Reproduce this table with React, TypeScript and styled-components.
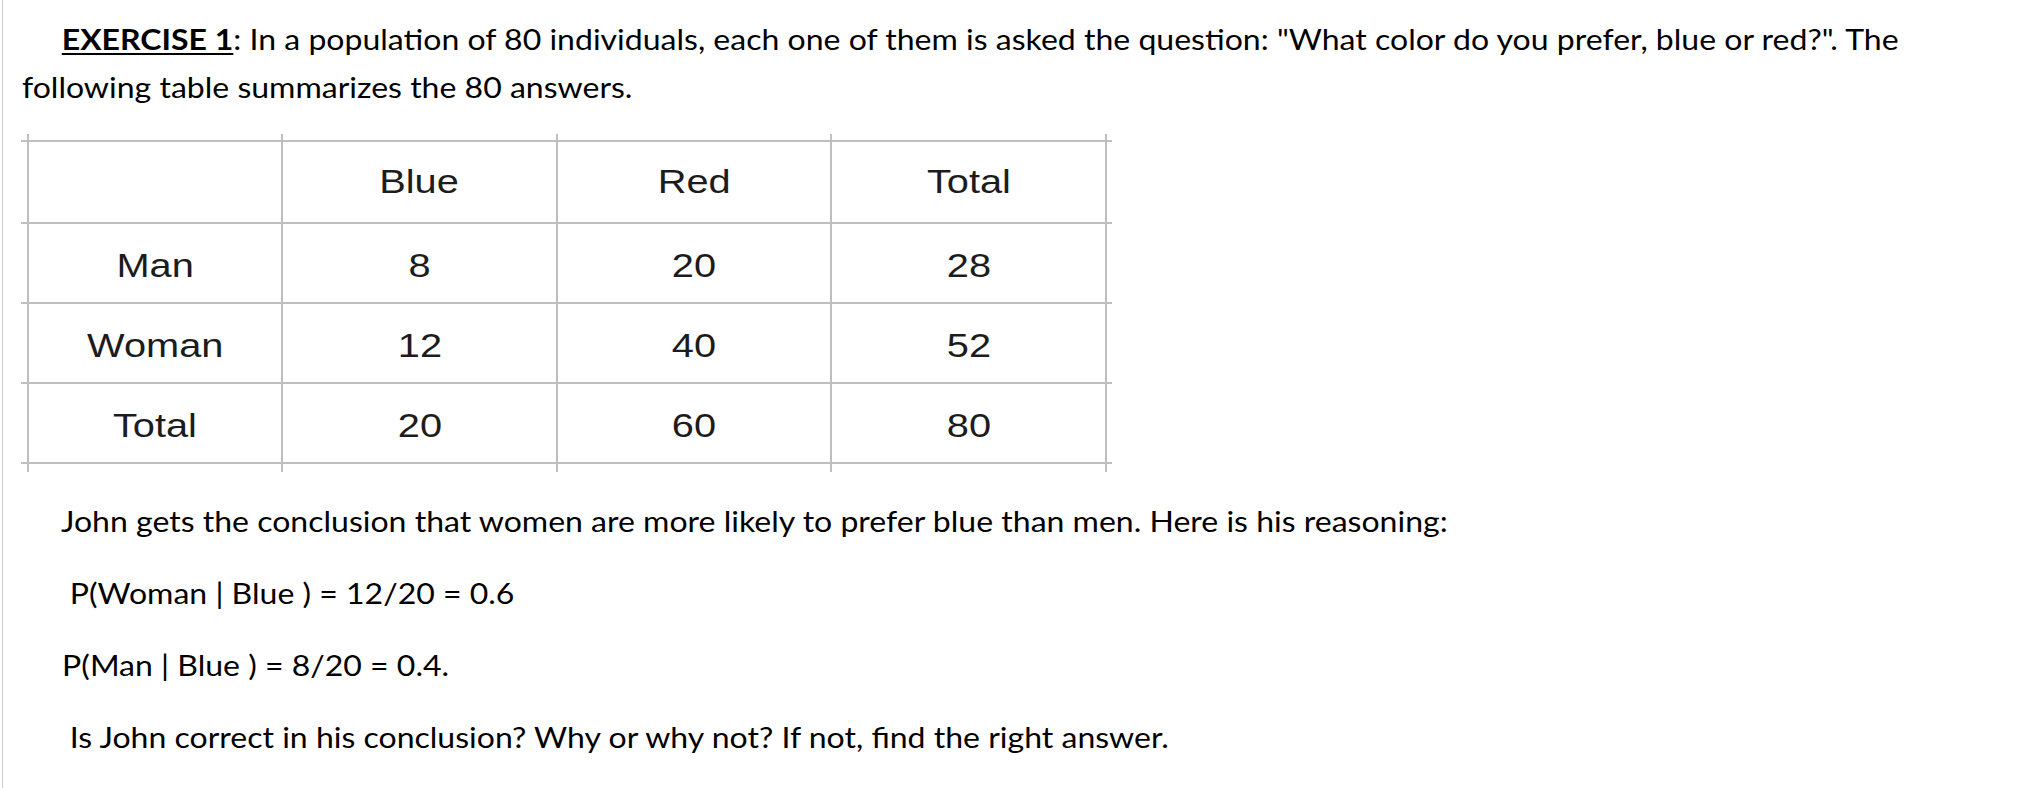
import React from "react";
import styled, { createGlobalStyle } from "styled-components";

const GlobalStyle = createGlobalStyle`
  html, body { margin: 0; padding: 0; background: #ffffff; }
  body { font-family: Lato, "Noto Sans", sans-serif; color: #000000; }
`;

const LINE = "#bfbfbf";
const COLS = "6px 254px 275px 274px 275px 7px";

const Page = styled.div`
  margin-left: 2px;
  border-left: 1px solid #cfcfcf;
  min-height: 788px;
  box-sizing: border-box;
  padding-top: 15px;
  overflow: hidden;
`;

const Intro = styled.p`
  margin: 0;
  padding-left: 19px;
  font-size: 29px;
  line-height: 48px;
  white-space: nowrap;
  transform: scaleX(1.104);
  transform-origin: 19px center;
`;

const FirstLine = styled.span`
  padding-left: 36px;
`;

const Label = styled.strong`
  font-weight: 700;
  text-decoration: underline;
  text-underline-offset: 3px;
`;

const TableFrame = styled.div`
  margin: 23px 0 0 18px;
  width: max-content;
`;

const Row = styled.div<{ $h: number; $top?: boolean; $bottom?: boolean }>`
  display: grid;
  grid-template-columns: ${COLS};
  height: ${(p) => p.$h}px;
  box-sizing: border-box;
  border-top: ${(p) => (p.$top ? `2px solid ${LINE}` : "none")};
  border-bottom: ${(p) => (p.$bottom ? `2px solid ${LINE}` : "none")};
`;

const Cell = styled.div<{ $line?: boolean; $head?: boolean }>`
  display: flex;
  align-items: center;
  justify-content: center;
  box-sizing: border-box;
  padding: ${(p) => (p.$head ? "0 0 2px" : "3px 0 0")};
  border-left: ${(p) => (p.$line ? `2px solid ${LINE}` : "none")};
`;

const CellText = styled.span`
  display: inline-block;
  font-family: "Liberation Sans", Arial, sans-serif;
  font-size: 34px;
  line-height: 1;
  color: #1c1c1c;
  transform: scaleX(1.17);
`;

const Reasoning = styled.div`
  display: flex;
  flex-direction: column;
  gap: 22px;
  padding: 24px 0 0 58px;
  font-size: 29px;
  line-height: 50px;
  transform: scaleX(1.104);
  transform-origin: 58px center;
`;

const Line = styled.p<{ $indent?: number }>`
  margin: 0;
  padding-left: ${(p) => p.$indent ?? 0}px;
  white-space: nowrap;
`;

const rows = [
  { h: 82, cells: ["", "Blue", "Red", "Total"] },
  { h: 80, cells: ["Man", "8", "20", "28"] },
  { h: 80, cells: ["Woman", "12", "40", "52"] },
  { h: 82, cells: ["Total", "20", "60", "80"] },
];

const StubRow = ({ h }: { h: number }) => (
  <Row $h={h}>
    <Cell />
    <Cell $line />
    <Cell $line />
    <Cell $line />
    <Cell $line />
    <Cell $line />
  </Row>
);

export default function App() {
  return (
    <>
      <GlobalStyle />
      <Page>
        <Intro>
          <FirstLine>
            <Label>EXERCISE 1</Label>: In a population of 80 individuals, each one of them is asked the
            question: "What color do you prefer, blue or red?". The
          </FirstLine>
          <br />
          following table summarizes the 80 answers.
        </Intro>

        <TableFrame>
          <StubRow h={6} />
          {rows.map((r, i) => (
            <Row key={i} $h={r.h} $top $bottom={i === rows.length - 1}>
              <Cell />
              {r.cells.map((c, j) => (
                <Cell key={j} $line $head={i === 0}>
                  {c && <CellText>{c}</CellText>}
                </Cell>
              ))}
              <Cell $line />
            </Row>
          ))}
          <StubRow h={8} />
        </TableFrame>

        <Reasoning>
          <Line>
            John gets the conclusion that women are more likely to prefer blue than men. Here is his
            reasoning:
          </Line>
          <Line $indent={8}>P(Woman | Blue ) = 12/20 = 0.6</Line>
          <Line $indent={1}>P(Man | Blue ) = 8/20 = 0.4.</Line>
          <Line $indent={8}>Is John correct in his conclusion? Why or why not? If not, find the right answer.</Line>
        </Reasoning>
      </Page>
    </>
  );
}
